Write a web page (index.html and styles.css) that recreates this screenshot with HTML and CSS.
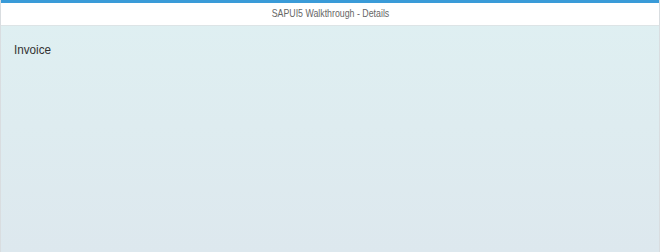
FILE: index.html
```html
<!DOCTYPE html>
<html lang="en">
<head>
    <meta charset="UTF-8">
    <title>SAPUI5 Walkthrough - Details</title>
    <link rel="stylesheet" href="styles.css">
</head>
<body>
    <div class="shell">
        <div class="page">
            <header class="page-header">
                <h1>SAPUI5 Walkthrough - Details</h1>
            </header>
            <section class="page-content">
                <h2 class="object-title">Invoice</h2>
            </section>
        </div>
    </div>
</body>
</html>
```

FILE: styles.css
```css
html, body {
    margin: 0;
    padding: 0;
    height: 100%;
}
body {
    font-family: "Liberation Sans", Arial, sans-serif;
}
.shell {
    height: 100%;
    box-sizing: border-box;
    border-left: 1px solid #d9dde0;
    border-right: 1px solid #d9dde0;
    background: linear-gradient(to bottom, #dff0f2, #dde8ee);
}
.page {
    display: flex;
    flex-direction: column;
    height: 100%;
}
.page-header {
    border-top: 3px solid #3a9bd8;
    background-color: white;
    height: 22px;
    border-bottom: 1px solid #dde4e6;
    display: flex;
    align-items: center;
    justify-content: center;
}
h1 {
    margin: 0 0 2px;
    font-size: 11px;
    font-weight: normal;
    color: #666;
    transform: scaleX(0.8);
}
.page-content {
    padding: 16px 13px;
}
.object-title {
    margin: 0;
    font-size: 13px;
    font-weight: normal;
    color: #333;
    transform: scaleX(0.9);
    transform-origin: left center;
}
```
